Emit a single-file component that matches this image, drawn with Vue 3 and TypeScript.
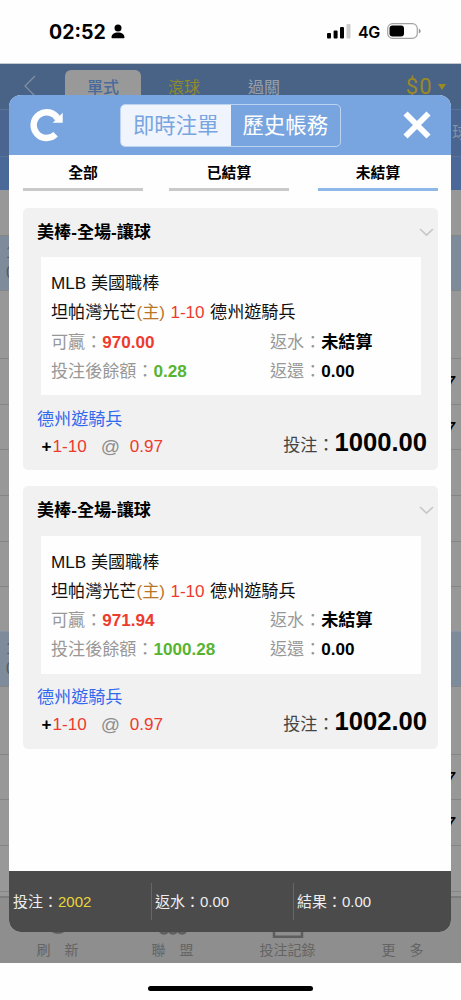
<script setup lang="ts">
interface Bet {
  title: string
  win: string
  balance: string
  total: string
}

const bets: Bet[] = [
  { title: '美棒-全場-讓球', win: '970.00', balance: '0.28', total: '1000.00' },
  { title: '美棒-全場-讓球', win: '971.94', balance: '1000.28', total: '1002.00' },
]

const filters = [
  { label: '全部', active: false },
  { label: '已結算', active: false },
  { label: '未結算', active: true },
]

const rows = [
  { kind: 'h46' },
  { kind: 'band' },
  { kind: 'h68' },
  { kind: 'h46', odd: '7' },
  { kind: 'h45', odd: '7' },
  { kind: 'h45' },
  { kind: 'h46' },
  { kind: 'h45' },
  { kind: 'h45 plain' },
  { kind: 'band' },
  { kind: 'h68' },
  { kind: 'h45', odd: '7' },
  { kind: 'h46', odd: '7' },
  { kind: 'h45' },
]
</script>

<template>
  <div class="screen" lang="zh-TW">
    <div class="status">
      <div class="clock">
        <span>02:52</span>
        <svg class="person" width="14" height="15" viewBox="0 0 14 15">
          <circle cx="7" cy="4" r="3.5" />
          <path d="M.5 13.6C.5 10.2 3.2 8.6 7 8.6s6.500 1.600 6.500 5q0 .7-.8.7H1.300q-.8 0-.8-.7Z" />
        </svg>
      </div>
      <div class="signal">
        <svg width="24" height="15" viewBox="0 0 24 15">
          <rect x="0" y="9" width="4" height="5.500" rx="1" />
          <rect x="6.600" y="6.500" width="4" height="8" rx="1" />
          <rect x="13" y="3" width="4" height="11.500" rx="1" />
          <rect x="19.500" y="0" width="4" height="14.500" rx="1" fill="#ccc" />
        </svg>
        <span class="net">4G</span>
        <svg width="34" height="16" viewBox="0 0 34 16">
          <rect x=".7" y=".7" width="29.600" height="14.600" rx="4.800" fill="none" stroke="#a3a3a3" stroke-width="1.200" />
          <rect x="2.500" y="2.500" width="14.500" height="11" rx="3" />
          <path d="M31.800 5.500q2 1 2 2.500t-2 2.500Z" fill="#999" />
        </svg>
      </div>
    </div>

    <div class="page">
      <div class="topnav">
        <svg class="back" width="12" height="22" viewBox="0 0 12 22">
          <path d="M11 1 1 11l10 10" fill="none" stroke="#8491a3" stroke-width="1.200" />
        </svg>
        <span class="mode on">單式</span>
        <span class="mode yellow">滾球</span>
        <span class="mode">過關</span>
        <span class="money">$0<i class="caret"></i></span>
      </div>
      <div class="subnav"><span>球</span></div>
      <div class="subnav2"></div>
      <div class="rows">
        <div v-for="(r, i) in rows" :key="i" class="row" :class="r.kind">
          <div v-if="r.kind === 'band'" class="edge"><span>1</span><span>0</span></div>
          <b v-if="r.odd">{{ r.odd }}</b>
        </div>
      </div>
      <div class="toolbar">
        <div class="tool">
          <svg width="22" height="22" viewBox="0 0 22 22"><circle cx="11" cy="11" r="9.300" fill="none" stroke="#5e5e5e" stroke-width="3" /></svg>
          <span class="wide">刷新</span>
        </div>
        <div class="tool t2">
          <svg width="30" height="22" viewBox="0 0 30 22">
            <g fill="none" stroke="#5e5e5e" stroke-width="2.500"><circle cx="6" cy="16" r="4.500" /><circle cx="15" cy="16" r="4.500" /><circle cx="24" cy="16" r="4.500" /></g>
          </svg>
          <span class="wide">聯盟</span>
        </div>
        <div class="tool t3">
          <svg width="32" height="25" viewBox="0 0 32 25"><path d="M2 1h28v21.800H2Z" fill="none" stroke="#5e5e5e" stroke-width="2.500" /></svg>
          <span>投注記錄</span>
        </div>
        <div class="tool t4"><span class="wide">更多</span></div>
      </div>
    </div>
    <div class="home"><i></i></div>

    <section class="modal">
      <header class="head">
        <svg class="reload" width="34" height="34" viewBox="0 0 34 34">
          <path d="M25.600 26.300A12.900 12.900 0 1 1 27.700 10.600" fill="none" stroke="#fff" stroke-width="6.400" />
          <path d="M32.700 4.800v9.900h-10Z" fill="#fff" />
        </svg>
        <div class="segment">
          <button class="seg sel">即時注單</button>
          <button class="seg">歷史帳務</button>
        </div>
        <svg class="close" width="28" height="28" viewBox="0 0 28 28">
          <path d="m2.500 2.500 23 23m0-23-23 23" stroke="#fff" stroke-width="5.800" />
        </svg>
      </header>

      <nav class="filters">
        <div v-for="f in filters" :key="f.label" class="filter" :class="{ active: f.active }">{{ f.label }}</div>
      </nav>

      <main class="list">
        <article v-for="b in bets" :key="b.total" class="card">
          <div class="title">
            <span>{{ b.title }}</span>
            <svg width="15" height="9" viewBox="0 0 15 9"><path d="m1 1 6.500 6.200L14 1" fill="none" stroke="#c8c8c8" stroke-width="1.700" /></svg>
          </div>
          <div class="detail">
            <div class="line">MLB 美國職棒</div>
            <div class="line match">坦帕灣光芒<span class="host">(主)</span> <span class="red">1-10</span> 德州遊騎兵</div>
            <div class="line two">
              <div><span class="dim">可贏：</span><b class="red">{{ b.win }}</b></div>
              <div><span class="dim">返水：</span><b>未結算</b></div>
            </div>
            <div class="line two">
              <div><span class="dim">投注後餘額：</span><b class="green">{{ b.balance }}</b></div>
              <div><span class="dim">返還：</span><b>0.00</b></div>
            </div>
          </div>
          <div class="pick">
            <div>
              <div class="team">德州遊騎兵</div>
              <div class="odds">
                <b>+</b><span class="red">1-10</span><span class="at">@</span><span class="red">0.97</span>
              </div>
            </div>
            <div class="stake"><span>投注：</span><b>{{ b.total }}</b></div>
          </div>
        </article>
      </main>

      <footer class="totals">
        <div>投注：<span class="gold">2002</span></div>
        <div>返水：0.00</div>
        <div>結果：0.00</div>
      </footer>
    </section>
  </div>
</template>

<style>
body {
  background: #fefefe;
}
</style>

<style scoped>
* {
  box-sizing: border-box;
}
.screen {
  position: relative;
  width: 461px;
  height: 1000px;
  overflow: hidden;
  background: #fefefe;
  font-family: "Liberation Sans", "Noto Sans CJK TC", sans-serif;
  color: #000;
}
.status {
  height: 64px;
  display: flex;
  justify-content: space-between;
  padding: 0 40px 0 49px;
  border-bottom: 1px solid #c5cad2;
}
.clock {
  display: flex;
  align-items: center;
  height: 63px;
  gap: 5px;
  font: 700 19.500px/24px Inter, sans-serif;
}
.signal {
  display: flex;
  align-items: center;
  height: 62px;
}
.net {
  width: 22px;
  margin: 1px 7px 0 7px;
  font: 600 16px/20px Inter, sans-serif;
  letter-spacing: -0.300px;
}
.page {
  height: 899px;
  background: #989898;
  overflow: hidden;
}
.topnav {
  height: 45px;
  padding: 6px 15px 0 24px;
  display: flex;
  background: #496387;
}
.back {
  margin-top: 5px;
}
.mode {
  width: 76px;
  height: 39px;
  margin-right: 4px;
  text-align: center;
  font-size: 16px;
  line-height: 35px;
  color: #99a0aa;
}
.mode.on {
  margin-left: 29px;
  border-radius: 6px;
  background: #999;
  color: #496a9a;
  font-weight: 500;
}
.mode.yellow {
  color: #918a2c;
}
.mode:not(.on) {
  padding-left: 2px;
}
.money {
  margin-left: auto;
  display: flex;
  align-items: center;
  height: 34px;
  color: #9a8a24;
  font: 22px/34px Roboto, sans-serif;
  letter-spacing: 1px;
}
.caret {
  margin-left: 5.500px;
  border: 4.500px solid transparent;
  border-top: 6px solid #9a8a24;
  border-bottom: 0;
}
.subnav {
  height: 47px;
  background: #496590;
  border-top: 1px solid #5a7297;
  color: #8191a7;
  font-size: 16px;
  line-height: 46px;
  text-align: right;
}
.subnav span {
  margin-right: -7px;
}
.subnav2 {
  height: 34px;
  background: #4a6898;
  border-top: 1px solid #5a7297;
}
.rows {
  height: 706px;
}
.row {
  position: relative;
  border-bottom: 1px solid #858585;
  text-align: right;
  padding: 14px 6px 0 0;
  font-size: 14px;
  overflow: hidden;
}
.h46 { height: 46px; }
.h45 { height: 45.300px; }
.h68 { height: 68px; }
.plain { border-color: #8794a5; }
.band {
  height: 55px;
  padding: 7px 0 0 6px;
  background: #7e8b9a;
}
.row b {
  font-style: italic;
}
.edge {
  display: flex;
  flex-direction: column;
  align-items: flex-start;
  font-size: 16px;
  line-height: 20px;
  color: #555b63;
}
.toolbar {
  height: 75px;
  display: flex;
  background: #8e8e8e;
  border-top: 2px solid #7d7d7d;
}
.tool {
  width: 115px;
  display: flex;
  flex-direction: column;
  align-items: center;
  justify-content: flex-start;
  padding-top: 14px;
  color: #646464;
  font-size: 14px;
}
.tool svg {
  flex: none;
}
.tool span {
  line-height: 20px;
  margin-top: 6px;
}
.tool .wide {
  letter-spacing: 14px;
  margin-right: -14px;
}
.t2 { padding-top: 15px; }
.t2 span { margin-top: 5px; }
.t3 { padding-top: 16px; }
.t3 span { margin-top: 1px; }
.t4 { padding-top: 36px; }
.home {
  height: 37px;
  display: flex;
  justify-content: center;
  padding-top: 23px;
}
.home i {
  width: 165px;
  height: 5px;
  border-radius: 3px;
  background: #000;
}
.modal {
  position: absolute;
  top: 95px;
  left: 9px;
  width: 442px;
  height: 837px;
  display: flex;
  flex-direction: column;
  background: #fefefe;
  border-radius: 12px;
  overflow: hidden;
}
.head {
  height: 60px;
  flex: none;
  display: flex;
  align-items: center;
  padding: 0 20px 0 21px;
  background: #78a5e0;
}
.reload, .close {
  flex: none;
}
.segment {
  display: flex;
  width: 221px;
  height: 43px;
  margin-left: 56px;
  border: 1px solid #bdd3f2;
  border-radius: 5px;
  overflow: hidden;
}
.seg {
  flex: 1;
  padding: 2px 0 0;
  border: 0;
  background: transparent;
  color: #fff;
  font: 21.400px/39px "Liberation Sans", "Noto Sans CJK TC", sans-serif;
}
.seg.sel {
  background: #eff4fd;
  color: #78a5e0;
}
.close {
  margin-left: auto;
}
.filters {
  flex: none;
  display: flex;
  gap: 26px;
  padding: 0 13px 0 14px;
}
.filter {
  width: 120px;
  height: 36px;
  border-bottom: 3px solid #c9c9c9;
  text-align: center;
  font-size: 14.800px;
  font-weight: 700;
  line-height: 37px;
}
.filter.active {
  margin-left: 3px;
  border-color: #8eb7ea;
}
.list {
  flex: 1;
  padding: 16.500px 13px 0 14px;
  display: flex;
  flex-direction: column;
  gap: 16px;
}
.card {
  height: 262.500px;
  border-radius: 5px;
  background: #f1f1f1;
  font-size: 17.100px;
}
.title {
  height: 49.500px;
  display: flex;
  justify-content: space-between;
  align-items: center;
  padding: 0 4px 0 14px;
  font-weight: 700;
}
.title span {
  padding-bottom: 4px;
}
.detail {
  height: 138px;
  margin: 0 17.500px;
  padding: 12px 0 0 10.500px;
  background: #fefefe;
}
.line {
  height: 29.300px;
  line-height: 29.300px;
  white-space: pre;
  color: #111;
}
.match {
  word-spacing: 0.700px;
}
.two {
  display: grid;
  grid-template-columns: 219px 1fr;
}
.two b {
  color: #000;
}
.dim { color: #989898; }
.host { color: #b87427; }
.red, .two b.red { color: #ed3b2d; }
.two b.green { color: #57b432; }
.pick {
  display: flex;
  justify-content: space-between;
  padding: 9.500px 11px 0 14px;
}
.team {
  line-height: 29px;
  color: #3369ed;
}
.odds {
  display: flex;
  align-items: center;
  height: 25px;
  line-height: 25px;
  padding-left: 4.500px;
}
.odds b {
  width: 11px;
}
.at {
  width: 20px;
  margin: 0 9px 0 14px;
  font-size: 19px;
  color: #8d8d8d;
}
.stake {
  display: flex;
  align-items: baseline;
  height: 38px;
  margin-top: 18.500px;
  line-height: 38px;
  color: #444;
}
.stake b {
  font-size: 25.600px;
  color: #000;
}
.totals {
  flex: none;
  height: 61px;
  display: flex;
  align-items: center;
  background: #4b4b4b;
  color: #eee;
  font-size: 15px;
}
.totals div {
  width: 142px;
  height: 37px;
  padding-left: 4px;
  line-height: 38px;
}
.totals div + div {
  padding-left: 3px;
  border-left: 1px solid #666;
}
.gold { color: #ead439; }
</style>
